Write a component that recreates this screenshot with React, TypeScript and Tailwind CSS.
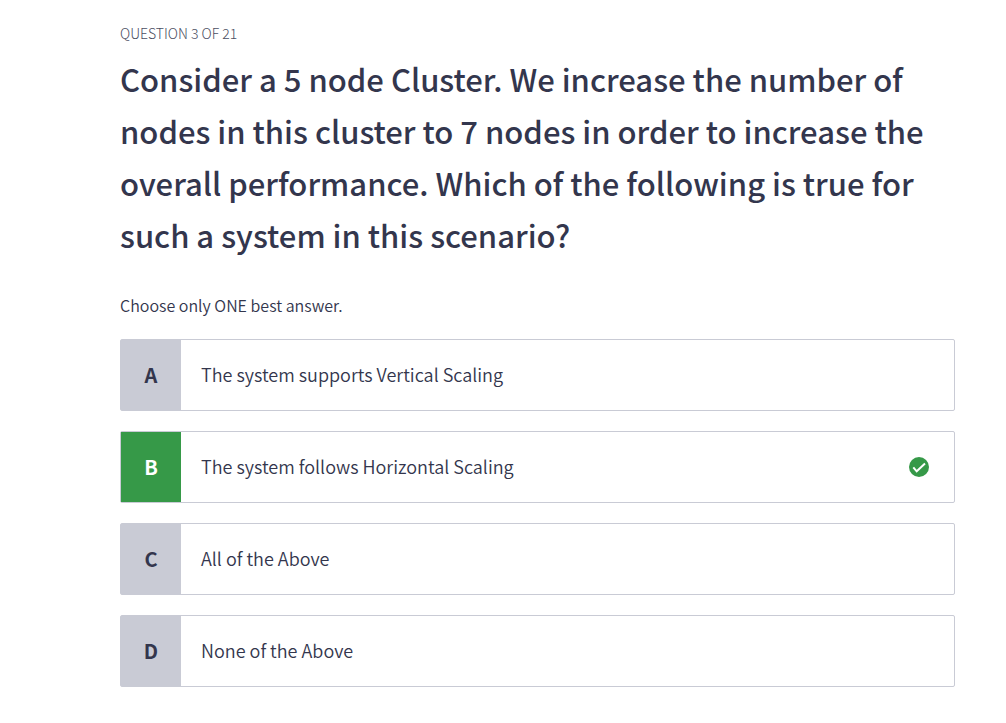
import { useState } from "react";

const options = [
  { letter: "A", text: "The system supports Vertical Scaling" },
  { letter: "B", text: "The system follows Horizontal Scaling", correct: true },
  { letter: "C", text: "All of the Above" },
  { letter: "D", text: "None of the Above" },
];

function CheckBadge() {
  return (
    <svg viewBox="0 0 20 20" className="size-5 shrink-0" role="img" aria-label="Correct answer">
      <circle cx="10" cy="10" r="10" fill="#369948" />
      <path d="M4.3 10.4l3.4 3.9L16 6.6" fill="none" stroke="#fff" strokeWidth="2" />
    </svg>
  );
}

export default function App() {
  const [selected, setSelected] = useState("B");
  return (
    <main className="min-h-screen bg-white pt-[23px] pr-[51px] pb-9 pl-[120px] font-['Noto_Sans_CJK_SC',sans-serif] text-[#33364d]">
      <p className="text-sm leading-5 font-light text-[#4b4e62] uppercase">Question 3 of 21</p>
      <h1 className="mt-2.5 text-[31px] leading-[52px] font-medium">
        Consider a 5 node Cluster. We increase the number of nodes in this cluster to 7 nodes in order to increase the
        overall performance. Which of the following is true for such a system in this scenario?
      </h1>
      <fieldset className="mt-8">
        <legend className="mb-[22px] text-base leading-6 font-[350]">Choose only ONE best answer.</legend>
        <div className="flex flex-col gap-5">
          {options.map((o) => (
            <label
              key={o.letter}
              className="flex min-h-[72px] cursor-pointer items-stretch rounded-xs border border-[#c9cbd5] bg-white"
            >
              <input
                type="radio"
                name="answer"
                className="sr-only"
                checked={selected === o.letter}
                onChange={() => setSelected(o.letter)}
              />
              <span
                className={
                  o.correct
                    ? "flex w-[60px] items-center justify-center bg-[#369948] text-xl font-bold text-white"
                    : "flex w-[60px] items-center justify-center bg-[#c9cbd5] text-xl font-bold"
                }
              >
                {o.letter}
              </span>
              <span className="flex flex-1 items-center justify-between pr-[25px] pl-5">
                <span className="pb-0.5 text-lg font-[350]">{o.text}</span>
                {o.correct && <CheckBadge />}
              </span>
            </label>
          ))}
        </div>
      </fieldset>
    </main>
  );
}
